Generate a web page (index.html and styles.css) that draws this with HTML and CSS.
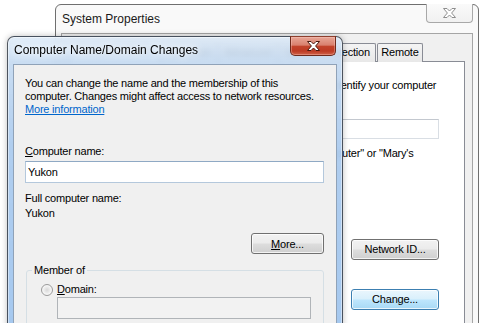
FILE: index.html
```html
<!DOCTYPE html>
<html lang="en">
<head>
<meta charset="utf-8">
<title>Computer Name/Domain Changes</title>
<link rel="stylesheet" href="styles.css">
</head>
<body>
<div class="desktop">

  <section class="win win-back">
    <header class="titlebar">
      <span class="title">System Properties</span>
      <button class="close close-back" aria-label="Close">
        <svg width="13" height="10" viewBox="0 0 13 10"><polygon points="0.5,0.5 4,0.5 6.5,3 9,0.5 12.5,0.5 8.6,5 12.5,9.5 9,9.5 6.5,7 4,9.5 0.5,9.5 4.4,5"/></svg>
      </button>
    </header>
    <div class="client client-back">
      <nav class="tabs">
        <span class="tab tab-active">Computer Name</span>
        <span class="tab tab-hw">Hardware</span>
        <span class="tab tab-adv">Advanced</span>
        <span class="tab tab-sp">System Protection</span>
        <span class="tab tab-rem">Remote</span>
      </nav>
      <div class="tabpage">
        <div class="intro">
          <svg class="pc-icon" width="32" height="32" viewBox="0 0 32 32"><rect x="3" y="4" width="26" height="18" rx="1" fill="#3a6ea5" stroke="#333"/><rect x="12" y="22" width="8" height="4" fill="#888"/><rect x="7" y="26" width="18" height="3" fill="#aaa"/></svg>
          <p>Windows uses the following information to identify your computer<br>on the network.</p>
        </div>
        <div class="form-grid">
          <label class="g-label">Computer description:</label>
          <input class="field field-back" type="text" value="">
          <span></span>
          <p class="example">For example: "Kitchen Computer" or "Mary's<br>Computer".</p>
          <span class="g-info">Full computer name:</span><span class="g-info">Yukon</span>
          <span class="g-info">Workgroup:</span><span class="g-info">WORKGROUP</span>
        </div>
        <div class="action action-1">
          <p>To use a wizard to join a domain or<br>workgroup, click Network ID.</p>
          <button class="btn btn-back">Network ID...</button>
        </div>
        <div class="action action-2">
          <p>To rename this computer or change its<br>domain or workgroup, click Change.</p>
          <button class="btn btn-back btn-hot">Change...</button>
        </div>
      </div>
    </div>
  </section>

  <section class="win win-front">
    <header class="titlebar titlebar-front">
      <span class="title title-front">Computer Name/Domain Changes</span>
      <button class="close close-front" aria-label="Close">
        <svg width="13" height="10" viewBox="0 0 13 10"><polygon points="0.5,0.5 4,0.5 6.5,3 9,0.5 12.5,0.5 8.6,5 12.5,9.5 9,9.5 6.5,7 4,9.5 0.5,9.5 4.4,5"/></svg>
      </button>
    </header>
    <div class="client client-front">
      <p class="note">You can change the name and the membership of this<br>computer. Changes might affect access to network resources.<br><a class="link" href="#">More information</a></p>
      <label class="lbl lbl-name"><u>C</u>omputer name:</label>
      <input class="field field-name" type="text" value="Yukon">
      <div class="lbl lbl-full">Full computer name:</div>
      <div class="lbl">Yukon</div>
      <div class="btn-row"><button class="btn btn-more"><u>M</u>ore...</button></div>
      <fieldset class="group">
        <legend>Member of</legend>
        <div class="radio-row"><span class="radio"></span><span><u>D</u>omain:</span></div>
        <input class="field field-domain" type="text" value="" disabled>
      </fieldset>
    </div>
  </section>

</div>
</body>
</html>
```
FILE: styles.css
```css
* { box-sizing: border-box; }
html, body { margin: 0; padding: 0; }
body {
  background: #ffffff;
  font-family: "Liberation Sans", Arial, sans-serif;
  font-size: 11px;
  letter-spacing: -0.2px;
  color: #000;
}
p { margin: 0; }
.desktop { position: relative; width: 485px; height: 323px; overflow: hidden; background: #fff; }

.win { position: absolute; }

/* ---------- back window ---------- */
.win-back {
  z-index: 1;
  left: 55px; top: 4px; width: 424px; height: 360px;
  border: 1px solid #6f6f6f;
  border-radius: 6px 6px 0 0;
  background: #f9f9f9;
  padding: 0 5px;
}
.titlebar { position: relative; height: 28px; display: flex; align-items: center; }
.title {
  font-size: 12px; letter-spacing: 0; line-height: 28px;
  padding-left: 1px; color: #1a1a1a;
}
.close {
  position: absolute; padding: 0; margin: 0;
  display: flex; align-items: center; justify-content: center;
}
.close-back {
  right: 0; top: -1px; width: 47px; height: 19px;
  border: 1px solid #a8a8a8; border-top: none;
  border-radius: 0 0 4px 4px;
  background: linear-gradient(#fafafa, #f1f1f1);
}
.close-back svg polygon { fill: #fff; stroke: #8e8e8e; stroke-width: 1; }

.client-back {
  border: 1px solid #a5a5a5;
  background: #f0f0f0;
  height: 330px;
  padding: 9px 7px 0 7px;
  display: flex; flex-direction: column;
}
.tabs { display: flex; height: 18px; position: relative; z-index: 1; }
.tab {
  height: 19px; line-height: 17px;
  border: 1px solid #898c95; border-bottom: none;
  border-radius: 2px 2px 0 0;
  background: linear-gradient(#f4f4f4, #e8e8e8);
  text-align: center; white-space: nowrap;
}
.tab-active { width: 91px; background: #fff; height: 21px; margin-top: -2px; }
.tab-hw { width: 58px; }
.tab-adv { width: 60px; }
.tab-sp { width: 98px; }
.tab-rem { width: 46px; margin-left: 1px; }
.tabpage {
  flex: 1;
  background: #fff;
  border: 1px solid #898c95;
  padding: 0 25px 0 12px;
}
.intro { display: flex; align-items: flex-start; gap: 19px; margin-top: 16px; line-height: 15px; white-space: nowrap; }
.pc-icon { flex: none; }
.form-grid {
  display: grid;
  grid-template-columns: 125px 1fr;
  align-items: center;
  line-height: 15px;
  margin-top: 9px;
}
.field {
  font-family: inherit; font-size: 11px; letter-spacing: -0.2px;
  margin: 0; display: block; outline: none;
}
.field-back { height: 20px; width: 100%; border: 1px solid #d9dee4; border-top-color: #c3c8cf; background: #fff; }
.example { margin-top: 7px; white-space: nowrap; }
.form-grid .g-info:nth-child(5), .form-grid .g-info:nth-child(6) { margin-top: 10px; }
.action { display: flex; align-items: center; justify-content: space-between; line-height: 15px; }
.action-1 { margin-top: 18px; }
.action-2 { margin-top: 20px; }

.btn {
  font-family: inherit; font-size: 11px; letter-spacing: -0.2px; color: #000;
  height: 21px; padding: 0;
  border: 1px solid #707070; border-radius: 3px;
  background: linear-gradient(#f2f2f2 0%, #ebebeb 48%, #dddddd 52%, #cfcfcf 100%);
  box-shadow: inset 0 0 0 1px rgba(255,255,255,0.75);
}
.btn-back { width: 88px; flex: none; }
.btn-hot {
  border-color: #3c7fb1;
  background: linear-gradient(#eaf6fd 0%, #d9f0fc 48%, #bee6fd 52%, #a7d9f5 100%);
}

/* ---------- front window ---------- */
.win-front {
  z-index: 2;
  left: 7px; top: 36px; width: 336px; height: 300px;
  border: 1px solid rgba(55, 60, 68, 0.85);
  border-radius: 7px 7px 0 0;
  padding: 0 5px;
  background: linear-gradient(180deg, rgba(220,233,247,0.86) 0px, rgba(194,216,240,0.9) 28px, rgba(170,202,238,0.93) 110px, rgba(160,197,238,0.95) 100%);
  backdrop-filter: blur(3px);
  box-shadow: 0 0 6px rgba(0,0,0,0.25), inset 0 0 0 1px rgba(255,255,255,0.45);
}
.titlebar-front { height: 27px; }
.title-front {
  line-height: 27px; color: #000;
  text-shadow: 0 0 6px #fff, 0 0 8px rgba(255,255,255,0.9);
}
.close-front {
  right: 1px; top: -1px; width: 46px; height: 20px;
  border: 1px solid #6e2a1c; border-top-color: #8d3f2e;
  border-radius: 0 0 5px 5px;
  background: linear-gradient(#e8a797 0%, #d9806e 45%, #c2432b 52%, #bd3b24 78%, #d0634a 100%);
  box-shadow: inset 0 0 0 1px rgba(255,210,200,0.35);
}
.close-front svg polygon { fill: #fff; stroke: #4a1a10; stroke-width: 1; }

.client-front {
  border: 1px solid #8fa2b8;
  background: #f0f0f0;
  height: 280px;
  padding: 12px 12px 0 11px;
}
.note { line-height: 13px; white-space: nowrap; }
.link { color: #0066cc; text-decoration: underline; }
.lbl { display: block; line-height: 15px; }
.lbl-name { margin-top: 28px; }
.field-name {
  width: 299px; height: 22px; margin-top: 2px;
  padding: 0 2px;
  border: 1px solid #b4c8dc; border-top-color: #8fa9c4;
  background: #fff;
}
.lbl-full { margin-top: 8px; }
.btn-row { display: flex; justify-content: flex-end; margin-top: 12px; width: 299px; }
.btn-more { width: 73px; }

.group {
  margin: 9px 0 0 1px; width: 298px;
  border: 1px solid #d5dfe5; border-radius: 3px;
  padding: 0 0 10px 14px;
}
.group legend { margin-left: -9px; padding: 0 2px; line-height: 15px; }
.radio-row { display: flex; align-items: center; gap: 4px; line-height: 15px; margin-top: 4px; }
.radio {
  width: 12px; height: 12px; border-radius: 50%; flex: none;
  border: 1px solid #9b9b9b;
  background: radial-gradient(circle at 50% 50%, #d8d8d8 0, #e6e6e6 30%, #f6f6f6 62%, #e9e9e9 100%);
}
.field-domain {
  margin-left: 16px; width: 254px; height: 22px;
  border: 1px solid #b0b4b8; background: #f2f2f2;
}
```
